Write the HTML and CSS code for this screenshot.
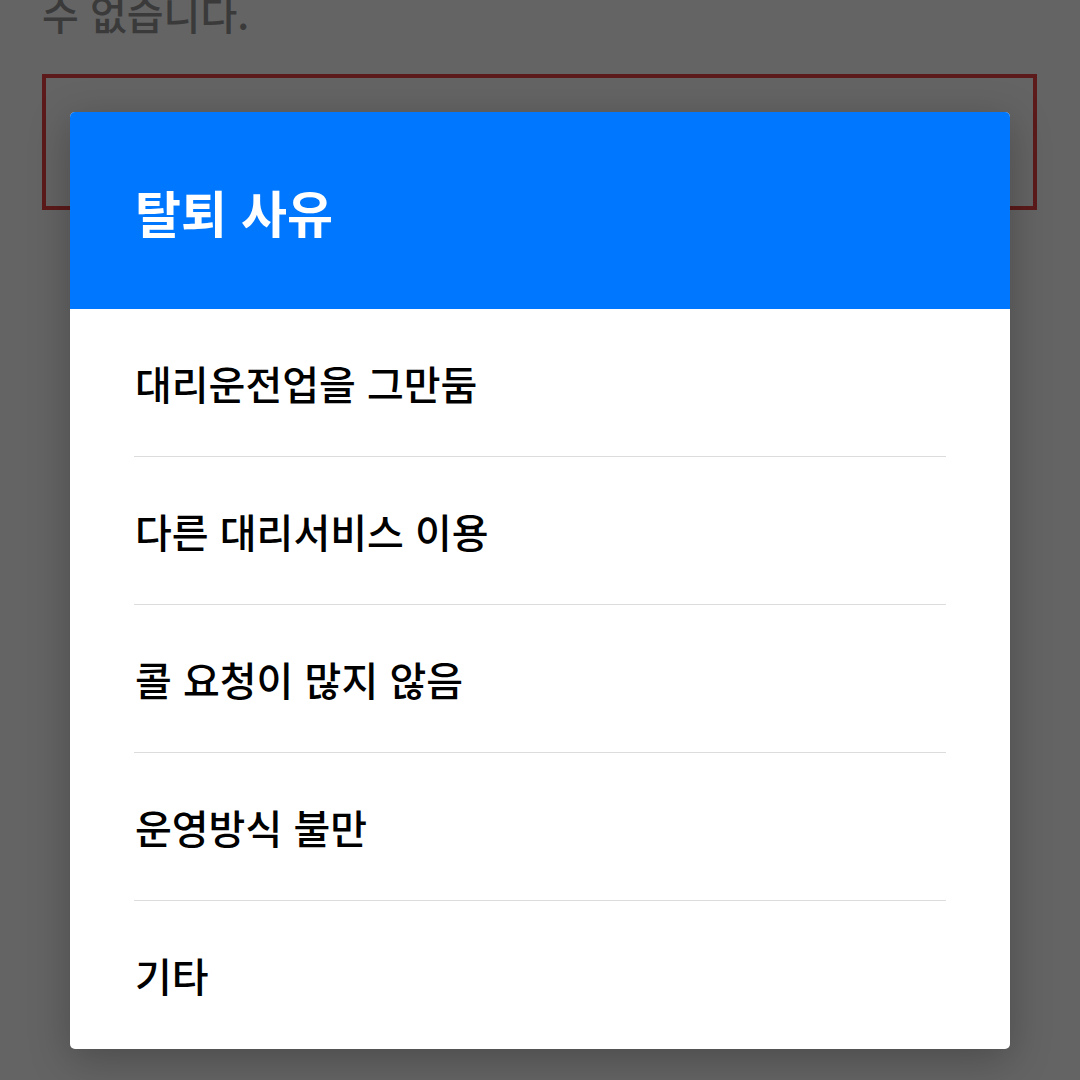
FILE: index.html
```html
<!DOCTYPE html>
<html lang="ko">
<head>
<meta charset="utf-8">
<link rel="stylesheet" href="styles.css">
</head>
<body>
<div class="page">
  <p class="notice">수 없습니다.</p>
  <div class="box"></div>
</div>
<div class="dialog">
  <div class="dialog-header">
    <h1 class="dialog-title">탈퇴 사유</h1>
  </div>
  <ul class="reasons">
    <li class="reason">대리운전업을 그만둠</li>
    <li class="reason">다른 대리서비스 이용</li>
    <li class="reason">콜 요청이 많지 않음</li>
    <li class="reason">운영방식 불만</li>
    <li class="reason">기타</li>
  </ul>
</div>
</body>
</html>
```
FILE: styles.css
```css
html, body {
  margin: 0;
  padding: 0;
  width: 1080px;
  height: 1080px;
  overflow: hidden;
  background: #646464;
  font-family: "Noto Sans CJK KR", "Noto Sans", sans-serif;
}
.page {
  padding: 0 43px 0 42px;
}
.notice {
  margin: -13px 0 0 0;
  font-size: 40px;
  line-height: 52px;
  color: #3a3a3a;
  font-weight: 500;
}
.box {
  margin-top: 35px;
  height: 128px;
  border: 4px solid #5c1a1a;
}
.dialog {
  position: absolute;
  left: 70px;
  top: 112px;
  width: 940px;
  background: #fff;
  border-radius: 5px;
  overflow: hidden;
  box-shadow: 0 10px 40px rgba(0,0,0,0.25);
}
.dialog-header {
  background: #0077ff;
  height: 197px;
  display: flex;
  align-items: center;
  padding: 0 65px;
}
.dialog-title {
  margin: 0;
  color: #fff;
  font-size: 50px;
  font-weight: 700;
  letter-spacing: 0;
}
.reasons {
  list-style: none;
  margin: 0;
  padding: 0 64px;
}
.reason {
  height: 147px;
  display: flex;
  align-items: center;
  font-size: 40px;
  font-weight: 500;
  color: #000;
  border-bottom: 1px solid #dcdcdc;
  padding-left: 1px;
}
.reason:last-child {
  border-bottom: none;
  height: 148px;
}
```
